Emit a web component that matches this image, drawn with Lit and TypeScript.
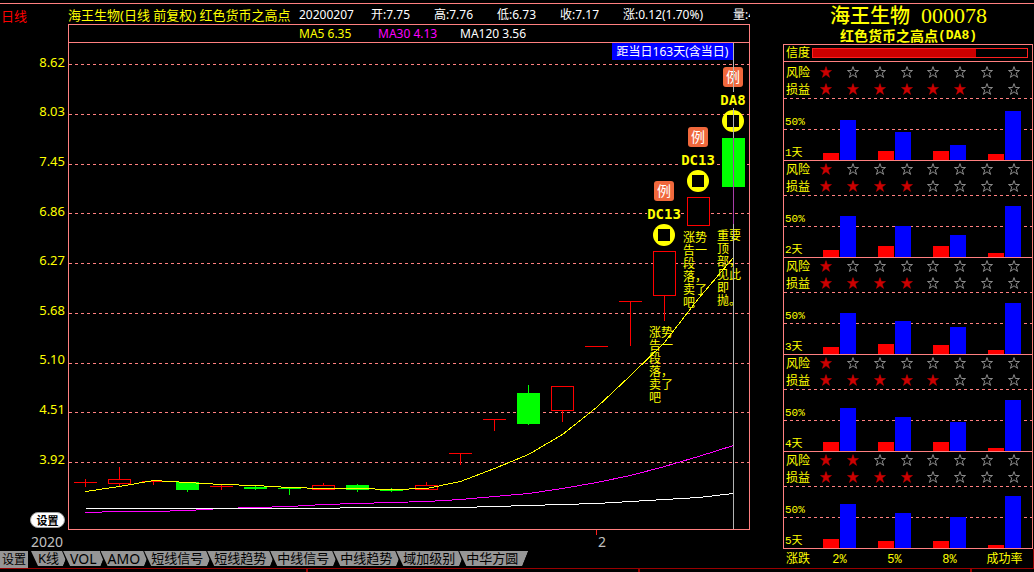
import { LitElement, html, svg, css } from "lit";
import { customElement, property, state } from "lit/decorators.js";
import { classMap } from "lit/directives/class-map.js";
import { styleMap } from "lit/directives/style-map.js";

// Size of the plotting area in its own units; everything inside scales with the window.
const PLOT_W = 680;
const PLOT_H = 486;
const STEP = 34.11;
const FIRST = 16;

type Kind = "up" | "down" | "flat";

interface Candle {
  kind: Kind;
  top: number;
  bottom: number;
  high: number;
  low: number;
}

const candle = (kind: Kind, top: number, bottom: number, high: number, low: number): Candle => ({
  kind,
  top,
  bottom,
  high,
  low,
});

const CANDLES: Candle[] = [
  candle("flat", 439, 439, 436, 444),
  candle("up", 436, 441, 424, 443),
  candle("flat", 438, 438, 438, 442),
  candle("down", 439, 447, 439, 449),
  candle("flat", 443, 443, 442, 447),
  candle("down", 444, 446, 442, 447),
  candle("down", 445, 446, 445, 452),
  candle("up", 442, 447, 440, 447),
  candle("down", 442, 447, 441, 449),
  candle("down", 447, 448, 445, 449),
  candle("up", 442, 447, 439, 447),
  candle("flat", 410, 410, 410, 422),
  candle("flat", 376, 376, 376, 388),
  candle("down", 350, 381, 342, 382),
  candle("up", 343, 368, 343, 379),
  candle("flat", 303, 303, 303, 303),
  candle("flat", 258, 258, 258, 303),
  candle("up", 208, 253, 208, 278),
  candle("up", 154, 183, 154, 183),
  candle("down", 95, 144, 95, 144),
];

const MA5 = [448, 443, 437, 439, 441, 442, 444, 445, 445, 446, 445, 438, 425, 411, 391, 364, 332, 299, 255, 214];
const MA30 = [469, 468, 468, 467, 465, 464, 463, 461, 460, 459, 458, 456, 453, 450, 445, 439, 432, 423, 413, 402];
const MA120 = [465, 465, 465, 465, 465, 465, 465, 465, 464, 464, 464, 464, 463, 462, 461, 460, 458, 456, 454, 450];

const PRICES = ["8.62", "8.03", "7.45", "6.86", "6.27", "5.68", "5.10", "4.51", "3.92"];
const GRID = [21, 71, 121, 170, 220, 270, 320, 369, 419];

const SIGNALS = [
  { code: "DC13", x: 595, y: 138 },
  { code: "DC13", x: 629, y: 84 },
  { code: "DA8", x: 664, y: 24 },
];

const NOTES = [
  { x: 580, y: 283, lines: ["涨势", "告一", "段", "落，", "卖了", "吧"] },
  { x: 614, y: 188, lines: ["涨势", "告一", "段", "落，", "卖了", "吧"] },
  { x: 648, y: 186, lines: ["重要", "顶", "部，", "见此", "即", "抛。"] },
];

const QUOTE = ["20200207", "开:7.75", "高:7.76", "低:6.73", "收:7.17", "涨:0.12(1.70%)", "量:431"];
const TABS = ["K线", "VOL", "AMO", "短线信号", "短线趋势", "中线信号", "中线趋势", "域加级别", "中华方圆"];

interface Horizon {
  day: string;
  risk: number;
  gain: number;
  bars: [number, number][];
}

const HORIZONS: Horizon[] = [
  { day: "1天", risk: 1, gain: 6, bars: [[11, 66], [15, 46], [15, 25], [10, 80]] },
  { day: "2天", risk: 1, gain: 4, bars: [[11, 67], [18, 51], [18, 36], [7, 84]] },
  { day: "3天", risk: 1, gain: 4, bars: [[11, 67], [16, 54], [15, 44], [7, 84]] },
  { day: "4天", risk: 1, gain: 5, bars: [[15, 70], [15, 56], [15, 48], [5, 84]] },
  { day: "5天", risk: 2, gain: 4, bars: [[15, 72], [11, 57], [11, 51], [5, 85]] },
];

const pctX = (x: number) => `${(x / PLOT_W) * 100}%`;
const pctY = (y: number) => `${(y / PLOT_H) * 100}%`;
const centre = (i: number) => Math.floor(FIRST + i * STEP) + 0.5;

@customElement("price-chart")
export class PriceChart extends LitElement {
  static styles = css`
    :host {
      display: block;
      position: relative;
      min-height: 300px;
      overflow: hidden;
    }
    .plot {
      position: absolute;
      inset: 0;
      width: 100%;
      height: 100%;
      display: block;
    }
    .plot * {
      vector-effect: non-scaling-stroke;
      shape-rendering: crispEdges;
    }
    .grid {
      stroke: #ff8080;
      stroke-dasharray: 3 3;
    }
    .up,
    .flat {
      stroke: #f00;
      fill: #000;
    }
    .down {
      stroke: #0f0;
      fill: #0f0;
    }
    .ma {
      fill: none;
    }
    .ma5 {
      stroke: #ff0;
    }
    .ma30 {
      stroke: #f0f;
    }
    .ma120 {
      stroke: #fff;
    }
    .distance {
      position: absolute;
      top: 0;
      right: 16px;
      width: 121px;
      height: 17px;
      font-size: 12px;
      line-height: 17px;
      text-align: center;
      white-space: nowrap;
      color: #fff;
      background: #00f;
    }
    .signal {
      position: absolute;
      width: 40px;
      margin-left: -20px;
      display: flex;
      flex-direction: column;
      align-items: center;
      color: #ff0;
    }
    .badge {
      width: 20px;
      height: 20px;
      border-radius: 3px;
      background: #f0683c;
      color: #fff;
      font-size: 14px;
      line-height: 20px;
      text-align: center;
    }
    .code {
      position: relative;
      z-index: 2;
      margin: 5px 0 2px;
      background: #000;
      font: bold 14px/16px "DejaVu Sans Mono", monospace;
    }
    .ring {
      width: 22px;
      height: 22px;
      display: block;
    }
    .note {
      position: absolute;
      margin: 0;
      font-size: 12px;
      line-height: 13px;
      color: #ff0;
    }
    .line {
      display: block;
      white-space: nowrap;
    }
    .cursor {
      position: absolute;
      z-index: 1;
      top: 0;
      bottom: 0;
      width: 1px;
      background: #b4b4b4;
    }
    .wick {
      position: absolute;
      left: 0;
      width: 1px;
      background: #a83ca8;
    }
  `;

  private line(values: number[], name: string) {
    const points = values.map((y, i) => `${centre(i)},${y + 0.5}`).join(" ");
    return svg`<polyline class="ma ${name}" points=${points}></polyline>`;
  }

  private candle(c: Candle, i: number) {
    const x = centre(i);
    const body =
      c.bottom - c.top <= 1
        ? svg`<line x1=${x - 11.5} x2=${x + 11.5} y1=${c.top + 0.5} y2=${c.top + 0.5}></line>`
        : svg`<rect x=${x - 11} y=${c.top + 0.5} width="22" height=${c.bottom - c.top - 1}></rect>`;
    return svg`<g class=${c.kind}>
      <line x1=${x} x2=${x} y1=${c.high} y2=${c.low}></line>
      ${body}
    </g>`;
  }

  render() {
    return html`
      <svg class="plot" viewBox="0 0 ${PLOT_W} ${PLOT_H}" preserveAspectRatio="none" aria-hidden="true">
        ${GRID.map((y) => svg`<line class="grid" x1="0" x2=${PLOT_W} y1=${y + 0.5} y2=${y + 0.5}></line>`)}
        ${CANDLES.map((c, i) => this.candle(c, i))}
        ${this.line(MA30, "ma30")} ${this.line(MA120, "ma120")} ${this.line(MA5, "ma5")}
      </svg>
      ${NOTES.map(
        (n) => html`<p class="note" style=${styleMap({ left: pctX(n.x), top: pctY(n.y) })}>
          ${n.lines.map((l) => html`<span class="line">${l}</span>`)}
        </p>`
      )}
      ${SIGNALS.map(
        (s) => html`<div class="signal" style=${styleMap({ left: pctX(s.x), top: pctY(s.y) })}>
          <span class="badge">例</span>
          <span class="code">${s.code}</span>
          <svg class="ring" viewBox="0 0 22 22" aria-hidden="true">
            <circle cx="11" cy="11" r="11" fill="#ff0"></circle>
            <rect x="5" y="5" width="12" height="12" fill="#000"></rect>
          </svg>
        </div>`
      )}
      <div class="cursor" style=${styleMap({ left: pctX(664) })}>
        <span class="wick" style=${styleMap({ top: pctY(95), height: pctY(86) })}></span>
      </div>
      <div class="distance">距当日163天(含当日)</div>
    `;
  }
}

@customElement("star-row")
export class StarRow extends LitElement {
  @property() label = "";
  @property({ type: Number }) score = 0;

  static styles = css`
    :host {
      display: flex;
      align-items: center;
      height: 17px;
      padding: 0 12px 0 2px;
    }
    .label {
      width: 34px;
      font-size: 12px;
      line-height: 17px;
    }
    .stars {
      flex: 1;
      display: flex;
      justify-content: space-between;
      padding-bottom: 1px;
    }
    .star {
      width: 12px;
      height: 12px;
      display: block;
      fill: none;
      stroke: #8c8c8c;
    }
    .on {
      fill: #c00;
      stroke: #c00;
      stroke-width: 0.5;
    }
  `;

  render() {
    return html`
      <span class="label">${this.label}</span>
      <span class="stars" role="img" aria-label="${this.label} ${this.score}/8">
        ${Array.from(
          { length: 8 },
          (_, i) => html`<svg class=${classMap({ star: true, on: i < this.score })} viewBox="0 0 12 12">
            <path d="M6 0.6 L7.4 4.5 H11.5 L8.2 7 L9.6 11.4 L6 8.8 L2.4 11.4 L3.8 7 L0.5 4.5 H4.6 Z"></path>
          </svg>`
        )}
      </span>
    `;
  }
}

@customElement("score-panel")
export class ScorePanel extends LitElement {
  static styles = css`
    :host {
      display: flex;
      flex-direction: column;
      color: #ff0;
    }
    .title {
      margin: 0;
      height: 24px;
      display: flex;
      justify-content: center;
      align-items: center;
      gap: 11px;
      font-size: 20px;
      line-height: 24px;
      font-weight: 500;
    }
    .number {
      font: 22px/24px "Liberation Serif", serif;
    }
    .subtitle {
      margin: 0;
      display: flex;
      justify-content: center;
      font-size: 14px;
      line-height: 16px;
      font-weight: 700;
    }
    .tag {
      font: bold 13px/16px "Liberation Mono", monospace;
    }
    .frame {
      flex: 1;
      display: flex;
      flex-direction: column;
      margin-right: 1px;
      border: 1px solid #ff8080;
    }
    .trust {
      display: flex;
      align-items: center;
      gap: 2px;
      height: 16px;
      padding: 0 4px 0 2px;
      border-bottom: 1px solid #ff8080;
      font-size: 12px;
      line-height: 16px;
    }
    .meter {
      flex: 1;
      height: 8px;
      border: 1px solid #ff2020;
    }
    .level {
      height: 100%;
      background: #c00;
    }
    .horizon {
      flex: 1;
      display: flex;
      flex-direction: column;
    }
    .horizon:first-of-type {
      padding-top: 2px;
    }
    .horizon + .horizon {
      border-top: 1px solid #ff8080;
    }
    .dashed {
      height: 1px;
      background: repeating-linear-gradient(90deg, #ff8080 0 3px, transparent 3px 6px);
    }
    .area {
      flex: 1 0 61px;
      display: grid;
      grid-template-columns: 1fr;
      grid-template-rows: 1fr;
    }
    .scale,
    .bars {
      grid-area: 1 / 1;
    }
    .scale {
      display: grid;
      grid-template-rows: 30px 1px 30px;
      align-content: space-between;
      font: 11px/14px "Liberation Mono", "Noto Sans CJK SC", monospace;
    }
    .mark {
      align-self: end;
      padding-left: 1px;
    }
    .bars {
      display: flex;
      justify-content: space-between;
      padding: 0 11px 0 39px;
    }
    .pair {
      width: 33px;
      display: flex;
      align-items: flex-end;
      gap: 1px;
    }
    .bar {
      width: 16px;
    }
    .fall {
      background: #f00;
    }
    .rise {
      background: #00f;
    }
    .legend {
      display: flex;
      height: 19px;
      padding-left: 3px;
      border-right: 1px solid #900;
      font: 12px/22px "Liberation Mono", "Noto Sans CJK SC", monospace;
    }
    .move {
      width: 37px;
      white-space: nowrap;
    }
    .heads {
      flex: 1;
      display: flex;
      justify-content: space-between;
      padding-right: 12px;
    }
    .head {
      width: 33px;
      display: flex;
      justify-content: center;
      white-space: nowrap;
    }
  `;

  private horizon(h: Horizon) {
    return html`<section class="horizon">
      <star-row label="风险" score=${h.risk}></star-row>
      <star-row label="损益" score=${h.gain}></star-row>
      <div class="dashed"></div>
      <div class="area">
        <div class="scale">
          <span class="mark">50%</span>
          <div class="dashed"></div>
          <span class="mark">${h.day}</span>
        </div>
        <div class="bars">
          ${h.bars.map(
            ([fall, rise]) => html`<div class="pair">
              <div class="bar fall" style=${styleMap({ height: `${fall}%` })}></div>
              <div class="bar rise" style=${styleMap({ height: `${rise}%` })}></div>
            </div>`
          )}
        </div>
      </div>
    </section>`;
  }

  render() {
    return html`
      <h1 class="title"><span>海王生物</span><span class="number">000078</span></h1>
      <h2 class="subtitle"><span>红色货币之高点</span><span class="tag">(DA8)</span></h2>
      <div class="frame">
        <div class="trust">
          <span>信度</span>
          <div class="meter" role="meter" aria-label="信度" aria-valuenow="76">
            <div class="level" style=${styleMap({ width: "76%" })}></div>
          </div>
        </div>
        ${HORIZONS.map((h) => this.horizon(h))}
      </div>
      <div class="legend">
        <span class="move">涨跌</span>
        <div class="heads">
          ${["2%", "5%", "8%", "成功率"].map((t) => html`<span class="head">${t}</span>`)}
        </div>
      </div>
    `;
  }
}

@customElement("app-root")
export class AppRoot extends LitElement {
  @state() private active = "K线";

  static styles = css`
    :host {
      display: flex;
      flex-direction: column;
      min-height: 100vh;
      box-sizing: border-box;
      padding-top: 3px;
      background: #000;
      color: #fff;
      font-family: "Noto Sans", "Noto Sans CJK SC", sans-serif;
      overflow: hidden;
    }
    .main {
      flex: 1;
      display: grid;
      grid-template-columns: minmax(0, 1fr) 251px;
      column-gap: 33px;
      border-top: 1px solid #ff8080;
      border-bottom: 1px solid #900;
    }
    .left {
      display: flex;
      flex-direction: column;
      min-width: 0;
    }
    .header {
      display: grid;
      grid-template-columns: 68px minmax(0, 1fr);
      height: 20px;
      line-height: 22px;
    }
    .period {
      padding-left: 1px;
      font-size: 13px;
      line-height: 24px;
      color: #f00;
    }
    .quote {
      display: grid;
      grid-template-columns: 231px 72px repeat(4, 63px) 110px 40px;
      overflow: hidden;
      white-space: nowrap;
      font-size: 12px;
    }
    .name {
      font-size: 13px;
      color: #ff0;
    }
    .chart {
      flex: 1;
      display: grid;
      grid-template-columns: 68px minmax(0, 1fr);
    }
    .axis {
      display: flex;
      flex-direction: column;
      padding: 13px 3px 0 0;
      font-size: 13px;
      color: #ff0;
    }
    .price {
      flex: 50 0 0;
      display: flex;
      align-items: center;
      justify-content: flex-end;
      line-height: 16px;
    }
    .below {
      flex: 45 0 0;
      display: flex;
      align-items: flex-end;
      justify-content: flex-end;
      padding-bottom: 2px;
    }
    .pill {
      width: 35px;
      height: 16px;
      padding: 0;
      border: 1px solid #a0a0a0;
      border-radius: 8px;
      background: #fff;
      color: #000;
      font: bold 11px/14px "Noto Sans CJK SC", sans-serif;
    }
    .frame {
      display: flex;
      flex-direction: column;
      border: 1px solid #ff8080;
    }
    .averages {
      display: grid;
      grid-template-columns: 79px 82px 1fr;
      height: 17px;
      padding-left: 230px;
      border-bottom: 1px solid #ff8080;
      font-size: 12px;
      line-height: 17px;
      white-space: nowrap;
    }
    .ma5 {
      color: #ff0;
    }
    .ma30 {
      color: #f0f;
    }
    .canvas {
      flex: 1;
    }
    .dates {
      display: grid;
      grid-template-columns: 68px minmax(0, 528fr) minmax(0, 154fr);
      height: 21px;
      font-size: 14px;
      line-height: 24px;
      color: #c0c0c0;
    }
    .year {
      padding-left: 31px;
    }
    .month {
      grid-column: 3;
      display: flex;
      gap: 1px;
    }
    .tick {
      width: 1px;
      height: 5px;
      background: #ff2020;
    }
    .tabs {
      display: flex;
      height: 17px;
    }
    .setup {
      width: 28px;
      height: 17px;
      margin-right: 2px;
      padding: 0;
      border: 0;
      background: #969696;
      color: #000;
      font: 12px/17px "Noto Sans", "Noto Sans CJK SC", sans-serif;
    }
    .tab {
      height: 15px;
      margin: 0 -7px 0 0;
      padding: 0;
      border: 0;
      background: #000;
      color: #000;
      font: 13px/15px "Noto Sans", "Noto Sans CJK SC", sans-serif;
      clip-path: polygon(0 0, 100% 0, calc(100% - 6px) 100%, 6px 100%);
    }
    .latin {
      font-size: 14px;
    }
    .face {
      display: block;
      height: 15px;
      padding: 0 10px 0 8px;
      white-space: nowrap;
      background: #969696;
      clip-path: polygon(1px 0, 100% 0, calc(100% - 6px) 100%, 8px 100%);
    }
    .foot {
      display: flex;
      height: 3px;
    }
    .slot {
      box-sizing: border-box;
      width: 332px;
      border-right: 2px solid #900;
    }
    .slot:first-child {
      width: 308px;
    }
  `;

  render() {
    return html`
      <main class="main">
        <div class="left">
          <div class="header">
            <span class="period">日线</span>
            <div class="quote">
              <span class="name">海王生物(日线 前复权) 红色货币之高点</span>
              ${QUOTE.map((q) => html`<span>${q}</span>`)}
            </div>
          </div>
          <div class="chart">
            <div class="axis">
              ${PRICES.map((p) => html`<span class="price">${p}</span>`)}
              <div class="below"><button class="pill" type="button">设置</button></div>
            </div>
            <div class="frame">
              <div class="averages">
                <span class="ma5">MA5 6.35</span>
                <span class="ma30">MA30 4.13</span>
                <span>MA120 3.56</span>
              </div>
              <price-chart class="canvas"></price-chart>
            </div>
          </div>
          <div class="dates">
            <span class="year">2020</span>
            <span class="month"><span class="tick"></span>2</span>
          </div>
          <nav class="tabs">
            <button class="setup" type="button">设置</button>
            ${TABS.map(
              (t) => html`<button
                class=${classMap({ tab: true, latin: /^[A-Z]+$/.test(t) })}
                type="button"
                aria-pressed=${this.active === t}
                @click=${() => (this.active = t)}
              >
                <span class="face">${t}</span>
              </button>`
            )}
          </nav>
        </div>
        <score-panel></score-panel>
      </main>
      <div class="foot"><span class="slot"></span><span class="slot"></span><span class="slot"></span></div>
    `;
  }
}
